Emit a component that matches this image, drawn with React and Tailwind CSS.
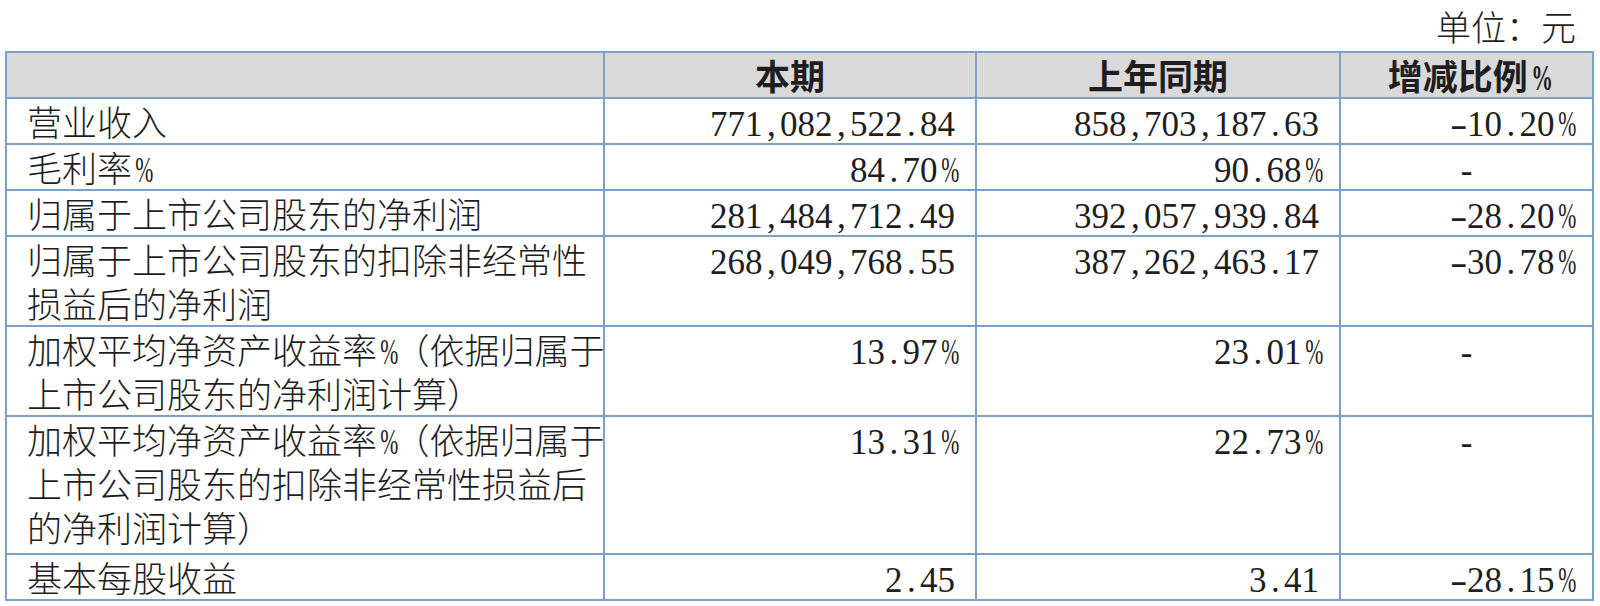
const rows = [
  { name: ['营业收入'], cur: '771,082,522.84', prev: '858,703,187.63', chg: '-10.20%' },
  { name: ['毛利率%'], cur: '84.70%', prev: '90.68%', chg: '-', center: true },
  { name: ['归属于上市公司股东的净利润'], cur: '281,484,712.49', prev: '392,057,939.84', chg: '-28.20%' },
  { name: ['归属于上市公司股东的扣除非经常性', '损益后的净利润'], cur: '268,049,768.55', prev: '387,262,463.17', chg: '-30.78%' },
  { name: ['加权平均净资产收益率%（依据归属于', '上市公司股东的净利润计算）'], cur: '13.97%', prev: '23.01%', chg: '-', center: true },
  { name: ['加权平均净资产收益率%（依据归属于', '上市公司股东的扣除非经常性损益后', '的净利润计算）'], cur: '13.31%', prev: '22.73%', chg: '-', center: true, extra: true },
  { name: ['基本每股收益'], cur: '2.45', prev: '3.41', chg: '-28.15%' },
];

// half-width glyphs, like the Song face used in the report
function Half({ text }) {
  return (
    <span className="font-['Liberation_Serif',serif]">
      {text.split('').map((c, i) => {
        if (c === '%') {
          return <span key={i} className="inline-block w-[0.5em] text-center scale-x-[0.62]">%</span>;
        }
        if (c === '-' && text.length > 1) {
          return <span key={i} className="inline-block w-[0.5em] text-center scale-x-[1.5]">-</span>;
        }
        return <span key={i} className="inline-block w-[0.5em] text-center">{c}</span>;
      })}
    </span>
  );
}

function Label({ text }) {
  const parts = text.split('%');
  return (
    <>
      {parts.map((p, i) => (
        <span key={i}>
          {p}
          {i < parts.length - 1 && <Half text="%" />}
        </span>
      ))}
    </>
  );
}

const cell = 'border-2 border-[#7ba1c9] align-top px-[20px] p-0 whitespace-nowrap';
const line = 'h-[44px] leading-[44px] overflow-visible';

export default function App() {
  return (
    <div className="w-[1600px] h-[606px] bg-white text-[#1e1e1e] text-[35px] font-light font-['Noto_Sans_CJK_SC','Noto_Sans',sans-serif] overflow-hidden">
      <div className="h-[51px] flex items-center justify-end pr-[24px] leading-none">单位：元</div>
      <table className="ml-[5px] w-[1587px] table-fixed border-collapse">
        <colgroup>
          <col className="w-[598px]" />
          <col className="w-[372px]" />
          <col className="w-[364px]" />
          <col className="w-[253px]" />
        </colgroup>
        <thead>
          <tr className="bg-[#d9d9d9]">
            <th className="border-2 border-[#7ba1c9] p-0">
              <div className={line}></div>
            </th>
            <th className="border-2 border-[#7ba1c9] p-0 font-bold">
              <div className={line}>本期</div>
            </th>
            <th className="border-2 border-[#7ba1c9] p-0 font-bold">
              <div className={line}>上年同期</div>
            </th>
            <th className="border-2 border-[#7ba1c9] p-0 font-bold">
              <div className={line}>
                增减比例<Half text="%" />
              </div>
            </th>
          </tr>
        </thead>
        <tbody>
          {rows.map((r, i) => (
            <tr key={i}>
              <td className={`${cell} ${r.extra ? 'pb-[4px]' : ''}`}>
                {r.name.map((l, j) => (
                  <div key={j} className={line}>
                    <Label text={l} />
                  </div>
                ))}
              </td>
              <td className={`${cell} text-right`}>
                <div className={line}>
                  <Half text={r.cur} />
                </div>
              </td>
              <td className={`${cell} text-right`}>
                <div className={line}>
                  <Half text={r.prev} />
                </div>
              </td>
              <td className={`${cell} ${r.center ? 'text-center' : 'text-right'}`}>
                <div className={line}>
                  <Half text={r.chg} />
                </div>
              </td>
            </tr>
          ))}
        </tbody>
      </table>
    </div>
  );
}
